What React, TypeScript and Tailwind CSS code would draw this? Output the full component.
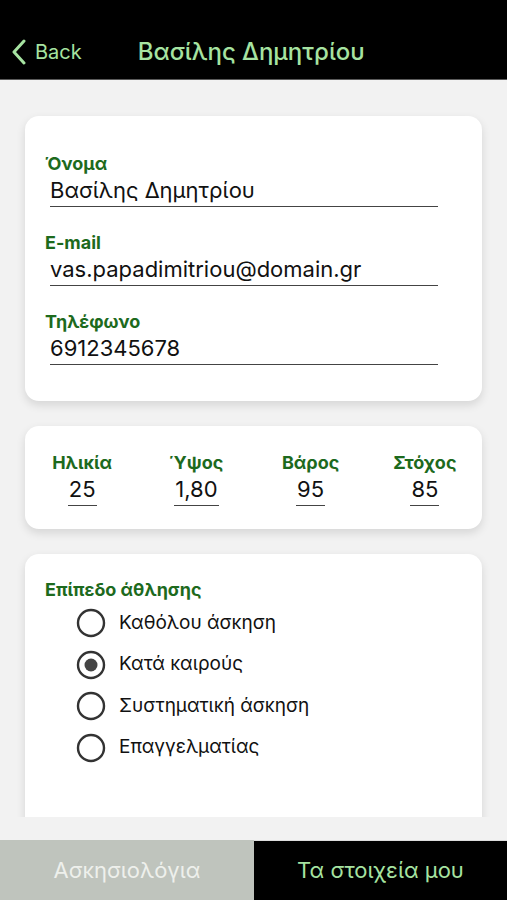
import React from 'react'

const FIELDS = [
  { label: 'Όνομα', value: 'Βασίλης Δημητρίου' },
  { label: 'E-mail', value: 'vas.papadimitriou@domain.gr' },
  { label: 'Τηλέφωνο', value: '6912345678' },
]

const STATS = [
  { label: 'Ηλικία', value: '25' },
  { label: 'Ύψος', value: '1,80' },
  { label: 'Βάρος', value: '95' },
  { label: 'Στόχος', value: '85' },
]

const LEVELS = ['Καθόλου άσκηση', 'Κατά καιρούς', 'Συστηματική άσκηση', 'Επαγγελματίας']

function Radio({ checked }: { checked: boolean }) {
  return (
    <svg width="30" height="30" viewBox="0 0 30 30" className="flex-shrink-0">
      <circle cx="15" cy="15" r="13" fill="none" stroke="#333" strokeWidth="2.4" />
      {checked && <circle cx="15" cy="15" r="6.5" fill="#444" />}
    </svg>
  )
}

export default function App() {
  return (
    <div
      className="w-[507px] h-[900px] flex flex-col bg-[#f2f2f2] overflow-hidden"
      style={{ fontFamily: "Inter, 'Noto Sans', sans-serif" }}
    >
      {/* Header */}
      <div className="h-[80px] flex-shrink-0 bg-black border-b border-[#5a5a5a] flex items-center pt-[25px]">
        <div className="flex items-center gap-[8px] pl-[11px] text-[#a6e3a1]">
          <svg width="16" height="26" viewBox="0 0 16 26" fill="none" stroke="currentColor" strokeWidth="3" strokeLinecap="round" strokeLinejoin="round">
            <polyline points="13,2 3,13 13,24" />
          </svg>
          <span className="text-[20px]">Back</span>
        </div>
        <div className="ml-[56px] text-[#a6e3a1] text-[24px] font-medium">Βασίλης Δημητρίου</div>
      </div>

      {/* Scroll area */}
      <div className="h-[737px] flex-shrink-0 overflow-hidden px-[25px] pt-[36px] flex flex-col gap-[25px]">
        <div className="flex-shrink-0 bg-white rounded-[14px] shadow-[0_4px_10px_rgba(0,0,0,0.12)] pl-[20px] pr-[44px] pt-[38px] pb-[36px] flex flex-col gap-[26px]">
          {FIELDS.map(f => (
            <div key={f.label} className="flex flex-col">
              <span className="text-[18px] font-bold text-[#1d6a1d] leading-[20px]">{f.label}</span>
              <span className="ml-[5px] text-[22px] text-[#111] leading-[32px] border-b-[1.5px] border-[#444]">{f.value}</span>
            </div>
          ))}
        </div>

        <div className="flex-shrink-0 bg-white rounded-[14px] shadow-[0_4px_10px_rgba(0,0,0,0.12)] h-[103px] grid grid-cols-4 pt-[26px]">
          {STATS.map(s => (
            <div key={s.label} className="flex flex-col items-center">
              <span className="text-[18px] font-bold text-[#1d6a1d] leading-[22px]">{s.label}</span>
              <span className="text-[22px] text-[#111] leading-[31px] border-b-[1.5px] border-[#444] px-[1px]">{s.value}</span>
            </div>
          ))}
        </div>

        <div className="flex-shrink-0 bg-white rounded-t-[14px] shadow-[0_4px_10px_rgba(0,0,0,0.12)] h-[300px] pl-[20px] pt-[25px]">
          <div className="text-[18px] font-bold text-[#1d6a1d] leading-[22px]">Επίπεδο άθλησης</div>
          <div className="flex flex-col gap-[11.5px] pl-[31px] pt-[7px]">
            {LEVELS.map((l, i) => (
              <div key={l} className="flex items-center gap-[13px]">
                <Radio checked={i === 1} />
                <span className="text-[19px] text-[#111]">{l}</span>
              </div>
            ))}
          </div>
        </div>
      </div>

      <div className="h-[23px] flex-shrink-0" />

      {/* Tab bar */}
      <div className="h-[60px] flex-shrink-0 flex">
        <div className="w-[254px] bg-[#bfc4bd] flex items-center justify-center text-[22px] text-[#eef0ec]">Ασκησιολόγια</div>
        <div className="flex-1 bg-black flex items-center justify-center text-[22px] text-[#a6e3a1] border-t border-[#ddd]">Τα στοιχεία μου</div>
      </div>
    </div>
  )
}
